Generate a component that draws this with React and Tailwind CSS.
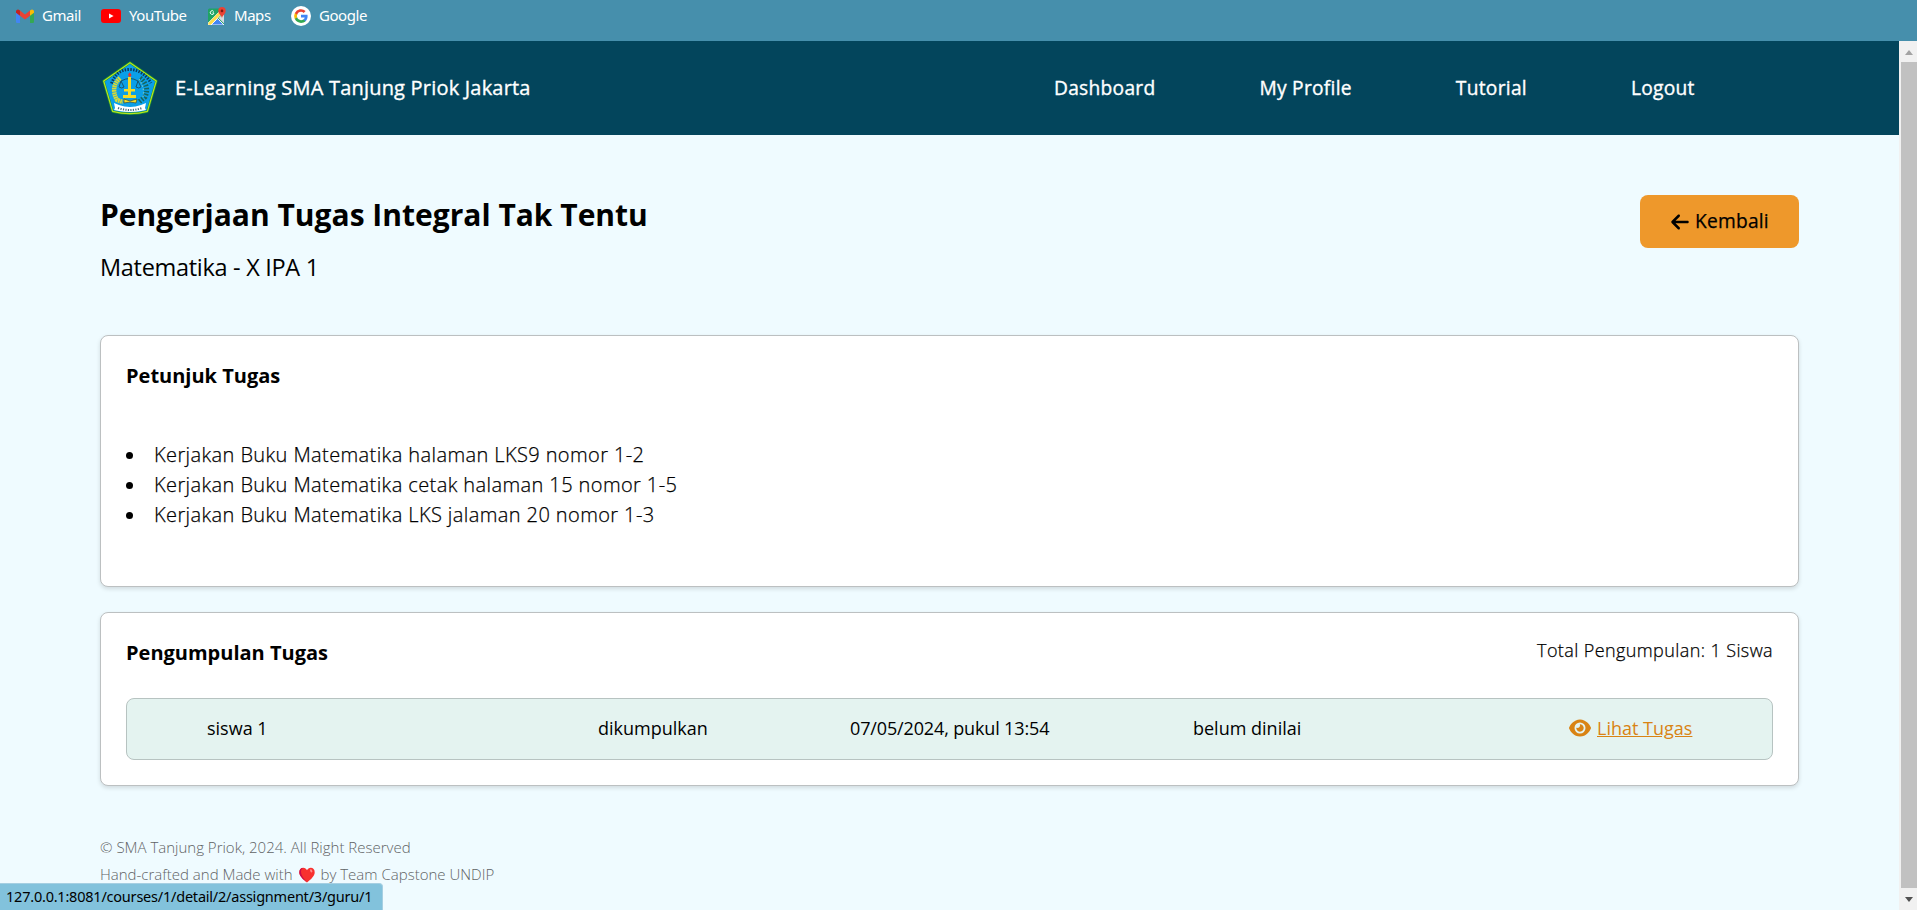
import { FaArrowLeft, FaEye } from "react-icons/fa6";

function GmailIcon() {
  return (
    <svg className="h-[14px] w-[18px]" viewBox="0 0 18 14">
      <path d="M0 3v9.700a1.200 1.200 0 0 0 1.200 1.300H4V6z" fill="#4285f4" />
      <path d="M18 3v9.700a1.200 1.200 0 0 1-1.200 1.300H14V6z" fill="#34a853" />
      <path d="M4 1.600 9 5.400l5-3.800v5.200L9 10.600 4 6.800z" fill="#ea4335" />
      <path d="M0 2.200A2 2 0 0 1 3.200.900L4 1.500v5.300L0 3.800z" fill="#c5221f" />
      <path d="M18 2.200A2 2 0 0 0 14.800.900l-.8.6v5.300l4-3z" fill="#fbbc04" />
    </svg>
  );
}

function YouTubeIcon() {
  return (
    <svg className="h-[14px] w-5" viewBox="0 0 20 14">
      <rect width="20" height="14" rx="3" fill="#f00" />
      <path d="m8 4.500 4.600 2.500L8 9.500z" fill="#fff" />
    </svg>
  );
}

function MapsIcon() {
  return (
    <svg className="h-[18px] w-[18px]" viewBox="0 0 18 18">
      <path d="M0 3a1.500 1.500 0 0 1 1.500-1.500h13A1.500 1.500 0 0 1 16 3v15H0z" fill="#1fa463" />
      <path d="M16 6v10.500L10.500 11z" fill="#d8dade" />
      <path d="M0 16 13 3l2 2.500L3 18H0z" fill="#fddc4c" stroke="#fff" strokeWidth=".6" />
      <path d="M3 18 9.500 11.500 16 18z" fill="#4285f4" stroke="#fff" strokeWidth=".9" />
      <path d="M6 5.900H4.500M5.700 4.500a1.900 1.900 0 1 0 .3 1.500" fill="none" stroke="#e8fff3" strokeWidth="1" />
      <path d="M14 11c-.3-2.600-3.700-4-3.700-7.300a3.700 3.700 0 0 1 7.400 0C17.700 7 14.300 8.400 14 11z" fill="#ea4335" />
      <circle cx="14" cy="3.900" r="1.300" fill="#801a14" />
    </svg>
  );
}

function GoogleIcon() {
  return (
    <svg className="h-5 w-5" viewBox="0 0 20 20">
      <circle cx="10" cy="10" r="10" fill="#fff" />
      <g transform="translate(2.500 2.500) scale(.625)">
        <path d="M22.560 12.250c0-.78-.07-1.530-.2-2.250H12v4.260h5.920a5.060 5.060 0 0 1-2.200 3.320v2.770h3.570c2.080-1.920 3.270-4.740 3.270-8.100z" fill="#4285f4" />
        <path d="M12 23c2.970 0 5.460-.98 7.280-2.660l-3.570-2.770c-.98.66-2.230 1.060-3.710 1.060-2.860 0-5.290-1.930-6.160-4.530H2.180v2.840A11 11 0 0 0 12 23z" fill="#34a853" />
        <path d="M5.840 14.090a6.600 6.600 0 0 1 0-4.180V7.070H2.180a11 11 0 0 0 0 9.860z" fill="#fbbc05" />
        <path d="M12 5.380c1.620 0 3.060.56 4.210 1.640l3.150-3.150A11 11 0 0 0 2.180 7.070l3.660 2.840C6.710 7.310 9.140 5.380 12 5.380z" fill="#ea4335" />
      </g>
    </svg>
  );
}

function SchoolLogo() {
  return (
    <svg className="mt-[2px] h-14 w-14" viewBox="0 0 56 56">
      <path d="M28 1.500 54.500 20 45.500 50.500Q28 55 10.500 50.500L1.500 20z" fill="#0b9fe8" stroke="#16873d" strokeWidth="2.400" strokeLinejoin="round" />
      <path d="M28 1.700 54.300 20 45.400 50.400Q28 54.800 10.600 50.400L1.700 20z" fill="none" stroke="#b9e61b" strokeWidth="1.200" strokeLinejoin="round" />
      <path d="M9.500 22.500Q15 8 28 8.500T49 22" fill="none" stroke="#0c3c5c" strokeWidth="3" strokeDasharray="1.500 1.300" />
      <path d="M18 17Q8 26 15 39l6 2" fill="none" stroke="#d8da35" strokeWidth="4.500" strokeDasharray="1.800 .5" />
      <path d="M38 17q10 8 5 19l-6 5" fill="none" stroke="#17665d" strokeWidth="5" strokeDasharray="1.500 1.500" />
      <path d="M37 18q6 9 4 18" fill="none" stroke="#76c9c3" strokeWidth="1.200" strokeDasharray="1.500 2" />
      <path d="M19 20q9-5 17 0M19 20l-2 6q3 2 5 0l-3-6M36 20l-2 6q3 2 5 0l-3-6" fill="none" stroke="#174d61" strokeWidth=".9" />
      <path d="M26 16h3v12h4v2.500h-4V34h5v3H21v-3h5v-3.500h-4V28h4z" fill="#f3dc28" />
      <path d="M27.500 11.500q3.500 2.500.5 4.500-3.500-1.500-.5-4.500z" fill="#e5312f" />
      <path d="m22 38 6 2 7-2-1 4-6-1-6 1z" fill="#f3dc28" stroke="#3e4a30" strokeWidth=".7" />
      <path d="m12 42 5 2q11 4 22 0l5-2-1 5 1 2-5 1q-11 2-22 0l-5-1 1-2z" fill="#fff" />
      <path d="M16 47q12 4 24 0" fill="none" stroke="#476b7c" strokeWidth="2" strokeDasharray="1.200 1.300" />
    </svg>
  );
}

function Heart() {
  return (
    <svg className="mx-[6px] inline-block h-4 w-4" viewBox="0 0 16 16">
      <path d="M8 15.500C4 12.500.3 9 .3 5.300.3 2.500 2 .8 4.200.8 6 .8 7.200 1.700 8 3.200 8.800 1.700 10 .8 11.800.8c2.200 0 3.900 1.700 3.900 4.500 0 3.700-3.700 7.200-7.700 10.200z" fill="#f8312f" />
      <path d="M4 1C1.500 1 .3 3 .3 5.300.3 9 4 12.500 8 15.500 4.500 11.500 2 8 2 5c0-2 .7-3.300 2-4z" fill="#ca0b4a" />
      <ellipse cx="12.200" cy="3.800" rx="1" ry="1.700" fill="#ff8b8b" transform="rotate(-25 12.200 3.800)" />
    </svg>
  );
}

const bookmarks = [
  { label: "Gmail", Icon: GmailIcon, box: "ml-4 w-[85px] gap-2" },
  { label: "YouTube", Icon: YouTubeIcon, box: "w-[107px] gap-2" },
  { label: "Maps", Icon: MapsIcon, box: "w-[83px] gap-2" },
  { label: "Google", Icon: GoogleIcon, box: "gap-2" },
];

const tasks = [
  "Kerjakan Buku Matematika halaman LKS9 nomor 1-2",
  "Kerjakan Buku Matematika cetak halaman 15 nomor 1-5",
  "Kerjakan Buku Matematika LKS jalaman 20 nomor 1-3",
];

export default function App() {
  return (
    <div className="relative flex h-[910px] w-[1917px] flex-col overflow-hidden bg-[#effbff] font-['Open_Sans',sans-serif] text-black">
      <div className="flex h-[41px] shrink-0 items-start bg-[#468fac] font-['Noto_Sans',sans-serif] text-[15px] text-white">
        {bookmarks.map(({ label, Icon, box }) => (
          <div key={label} className={`flex h-8 items-center ${box}`}>
            <Icon />
            <span className="-mt-[2px] tracking-[-0.45px]">{label}</span>
          </div>
        ))}
      </div>

      <div className="flex min-h-0 flex-1">
        <div className="flex min-w-0 flex-1 flex-col">
          <header className="flex h-[94px] shrink-0 items-center bg-[#03455c] pl-[102px] text-xl font-medium text-white [-webkit-text-stroke:0.35px]">
            <SchoolLogo />
            <span className="ml-[17px] w-[879px] tracking-[0.2px]">E-Learning SMA Tanjung Priok Jakarta</span>
            <nav className="flex gap-[104px] text-[19.2px] tracking-[0.27px] whitespace-nowrap">
              <a>Dashboard</a>
              <a>My Profile</a>
              <a>Tutorial</a>
              <a>Logout</a>
            </nav>
          </header>

          <main className="flex flex-col px-[100px] pt-[60px]">
            <div className="flex h-[140px] items-start justify-between">
              <div>
                <h1 className="text-[30px] leading-10 font-bold">Pengerjaan Tugas Integral Tak Tentu</h1>
                <p className="mt-4 text-[23.5px] leading-8 tracking-[-0.3px]">Matematika - X IPA 1</p>
              </div>
              <button className="flex h-[53px] w-[159px] items-center justify-center gap-[5px] rounded-lg bg-[#ee982b] text-[19.2px] font-medium tracking-[0.2px]">
                <FaArrowLeft className="size-5" />
                <span className="[-webkit-text-stroke:0.25px]">Kembali</span>
              </button>
            </div>

            <section className="h-[252px] rounded-lg border border-[#bcc0c1] bg-white px-[25px] pt-6 shadow-[0_2px_4px_rgba(0,0,0,0.13)]">
              <h2 className="text-xl leading-8 font-bold">Petunjuk Tugas</h2>
              <ul className="mt-[48px] text-xl leading-[30px] font-light tracking-[0.4px] [-webkit-text-stroke:0.25px]">
                {tasks.map((task) => (
                  <li key={task} className="flex items-center gap-[21px]">
                    <span className="size-[7px] rounded-full bg-black" />
                    {task}
                  </li>
                ))}
              </ul>
            </section>

            <section className="mt-[25px] h-[174px] rounded-lg border border-[#bcc0c1] bg-white px-[25px] pt-6 shadow-[0_2px_4px_rgba(0,0,0,0.13)]">
              <div className="flex justify-between">
                <h2 className="text-xl leading-8 font-bold">Pengumpulan Tugas</h2>
                <p className="text-lg leading-[26px] font-light tracking-[0.4px] [-webkit-text-stroke:0.25px]">Total Pengumpulan: 1 Siswa</p>
              </div>
              <div className="mt-[29px] flex h-[62px] items-center rounded-lg border border-[#b7c3c1] bg-[#e4f3f0] pb-[2px] pl-20 text-lg whitespace-nowrap">
                <span className="w-[391px]">siswa 1</span>
                <span className="w-[252px]">dikumpulkan</span>
                <span className="w-[343px] tracking-[-0.14px]">07/05/2024, pukul 13:54</span>
                <span className="w-[376px]">belum dinilai</span>
                <a className="flex items-center gap-[6px] text-[#d98314]">
                  <FaEye className="size-[22px]" />
                  <span className="underline">Lihat Tugas</span>
                </a>
              </div>
            </section>
          </main>

          <footer className="mt-[48px] pl-[100px] text-[15px] leading-[27px] font-light text-[#5f6365]">
            <p>© SMA Tanjung Priok, 2024. All Right Reserved</p>
            <p className="flex items-center">
              Hand-crafted and Made with <Heart /> by Team Capstone UNDIP
            </p>
          </footer>
        </div>

        <div className="flex w-[18px] shrink-0 flex-col bg-[#f1f1f1] pl-[2px]">
          <div className="flex h-[21px] w-full shrink-0 items-center justify-center pt-[2px]">
            <svg className="h-[5px] w-2" viewBox="0 0 8 5"><path d="M0 5 4 0l4 5z" fill="#a3a3a3" /></svg>
          </div>
          <div className="w-4 flex-1 bg-[#c1c1c1]" />
          <div className="flex h-[22px] w-full shrink-0 items-center justify-center">
            <svg className="h-[5px] w-2" viewBox="0 0 8 5"><path d="M0 0h8L4 5z" fill="#505050" /></svg>
          </div>
        </div>
      </div>

      <div className="absolute bottom-0 left-0 flex h-[27px] w-[383px] items-center rounded-tr border-t border-r border-[#a5cfe2] bg-[#82c2dc] pb-px pl-[6px] font-['Noto_Sans',sans-serif] text-[14.5px] tracking-[-0.22px] whitespace-nowrap">
        127.0.0.1:8081/courses/1/detail/2/assignment/3/guru/1
      </div>
    </div>
  );
}
